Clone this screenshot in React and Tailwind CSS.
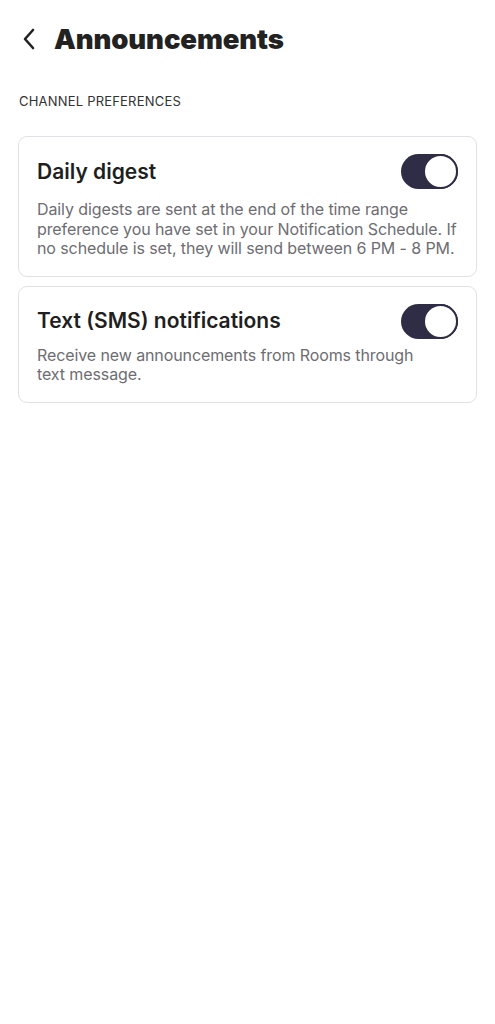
import React from "react";

function Toggle() {
  return (
    <div className="relative h-[35px] w-[57px] shrink-0 rounded-full bg-[#2f2d45]">
      <div className="absolute right-0 top-0 h-[35px] w-[35px] rounded-full border-[2px] border-[#2f2d45] bg-white" />
    </div>
  );
}

function PrefCard({ title, desc, descClass }) {
  return (
    <div className="rounded-[9px] border border-[#e2e2e6] bg-white pl-[18px] pr-[18px] pt-[17px] pb-[17px]">
      <div className="flex items-center justify-between">
        <div className="text-[21px] font-semibold leading-[26px] text-[#1f1f1f]">{title}</div>
        <Toggle />
      </div>
      <p className={`text-[16px] leading-[19.5px] tracking-[-0.1px] text-[#6d6d72] ${descClass}`}>{desc}</p>
    </div>
  );
}

export default function App() {
  return (
    <div
      className="min-h-[1024px] w-[495px] bg-white"
      style={{ fontFamily: "Inter, 'Noto Sans', sans-serif" }}
    >
      <header className="flex items-center pl-[20px] pt-[22px]">
        <svg width="18" height="26" viewBox="0 0 18 26" className="mr-[16px]">
          <path d="M13 4 L5 13 L13 22" fill="none" stroke="#222" strokeWidth="2.6" strokeLinecap="round" strokeLinejoin="round" />
        </svg>
        <h1 className="text-[27.5px] font-black leading-[34px] tracking-[-0.1px] text-[#222]">Announcements</h1>
      </header>
      <div className="pl-[19px] pt-[37px] text-[13px] leading-[16px] tracking-[0.2px] text-[#333]">CHANNEL PREFERENCES</div>
      <div className="flex flex-col gap-[9px] px-[18px] pt-[27px]">
        <PrefCard
          title="Daily digest"
          desc="Daily digests are sent at the end of the time range preference you have set in your Notification Schedule. If no schedule is set, they will send between 6 PM - 8 PM."
          descClass="mt-[11px]"
        />
        <PrefCard
          title="Text (SMS) notifications"
          desc="Receive new announcements from Rooms through text message."
          descClass="mt-[7px] pr-[40px]"
        />
      </div>
    </div>
  );
}
